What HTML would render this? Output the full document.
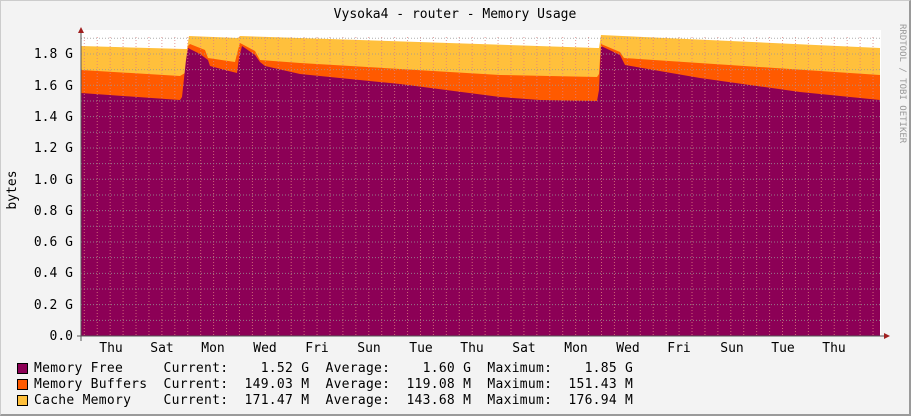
<!DOCTYPE html><html><head><style>
body{margin:0;width:911px;height:416px;background:#f3f3f3;overflow:hidden;font-family:"DejaVu Sans Mono","Liberation Mono",monospace}
#w{position:absolute;left:0;top:0;border-right:2px solid #9a9a9a;border-bottom:2px solid #9a9a9a;border-left:1px solid #ccc;border-top:1px solid #ccc;box-sizing:border-box;width:911px;height:416px}
pre{position:absolute;left:34px;margin:0;font-size:13px;letter-spacing:0.27px;line-height:16px;color:#000;font-family:"DejaVu Sans Mono",monospace}
</style></head><body><div id="w"></div>
<svg width="911" height="416" style="position:absolute;left:0;top:0" font-family="DejaVu Sans Mono, monospace">
<rect x="81" y="30" width="800" height="306" fill="#fff"/>
<polygon fill="#ffc03c" points="81,336 81,46 185,49 187,49 189,36 238,38 240,36 597,48 599,48 601,35 880,48 880,336"/>
<polygon fill="#ff5a00" points="81,336 81,70 180,76 185,73 188,46 190,44 205,50 208,58 235,62 238,50 240,43 255,51 260,60 300,63 500,75 597,77 599,74 601,44 620,52 624,58 880,75 880,336"/>
<polygon fill="#8c0056" points="81,336 81,93 180,100 182,97 186,60 188,48 200,54 208,60 210,66 225,70 237,73 239,58 242,46 255,55 260,62 265,66 300,74 400,84 500,97 540,100 597,101 599,90 601,46 620,55 625,65 700,78 800,92 880,100 880,336"/>
<g stroke="#e08080" stroke-width="1" stroke-dasharray="1,2" opacity="0.8" id="g"></g>
<g font-size="13" text-anchor="end" fill="#000">
<text x="73" y="340">0.0</text><text x="73" y="309">0.2 G</text><text x="73" y="277">0.4 G</text><text x="73" y="246">0.6 G</text><text x="73" y="215">0.8 G</text><text x="73" y="184">1.0 G</text><text x="73" y="152">1.2 G</text><text x="73" y="121">1.4 G</text><text x="73" y="90">1.6 G</text><text x="73" y="58">1.8 G</text></g>
<g font-size="13" text-anchor="middle">
<text x="111" y="352">Thu</text><text x="162" y="352">Sat</text><text x="213" y="352">Mon</text><text x="265" y="352">Wed</text><text x="317" y="352">Fri</text><text x="369" y="352">Sun</text><text x="421" y="352">Tue</text><text x="472" y="352">Thu</text><text x="524" y="352">Sat</text><text x="576" y="352">Mon</text><text x="628" y="352">Wed</text><text x="679" y="352">Fri</text><text x="732" y="352">Sun</text><text x="783" y="352">Tue</text><text x="834" y="352">Thu</text>
<text x="455" y="18">Vysoka4 - router - Memory Usage</text>
<text transform="translate(16,190) rotate(-90)">bytes</text>
</g>
<text transform="translate(900,24) rotate(90)" font-size="9" fill="#999">RRDTOOL / TOBI OETIKER</text>
<line x1="81" y1="32" x2="81" y2="341" stroke="#555"/><line x1="77" y1="336" x2="886" y2="336" stroke="#555"/>
<polygon points="78,33 84,33 81,27" fill="#a02020"/><polygon points="884,333 884,339 890,336" fill="#a02020"/>
<rect x="17.5" y="363.5" width="10" height="10" fill="#8c0056" stroke="#000"/>
<rect x="17.5" y="379.5" width="10" height="10" fill="#ff5a00" stroke="#000"/>
<rect x="17.5" y="395.5" width="10" height="10" fill="#ffc03c" stroke="#000"/>
</svg>
<pre style="top:361px">Memory Free     Current:    1.52 G  Average:    1.60 G  Maximum:    1.85 G
Memory Buffers  Current:  149.03 M  Average:  119.08 M  Maximum:  151.43 M
Cache Memory    Current:  171.47 M  Average:  143.68 M  Maximum:  176.94 M</pre>
<script>
var g=document.getElementById('g'),s='';
for(var x=84.3;x<881;x+=12.93)s+='<line x1="'+x+'" y1="37" x2="'+x+'" y2="336"/>';
for(var y=336-15.67;y>36;y-=15.67)s+='<line x1="81" y1="'+y+'" x2="880" y2="'+y+'" stroke="#999"/>';
g.innerHTML=s;
</script>
</body></html>
